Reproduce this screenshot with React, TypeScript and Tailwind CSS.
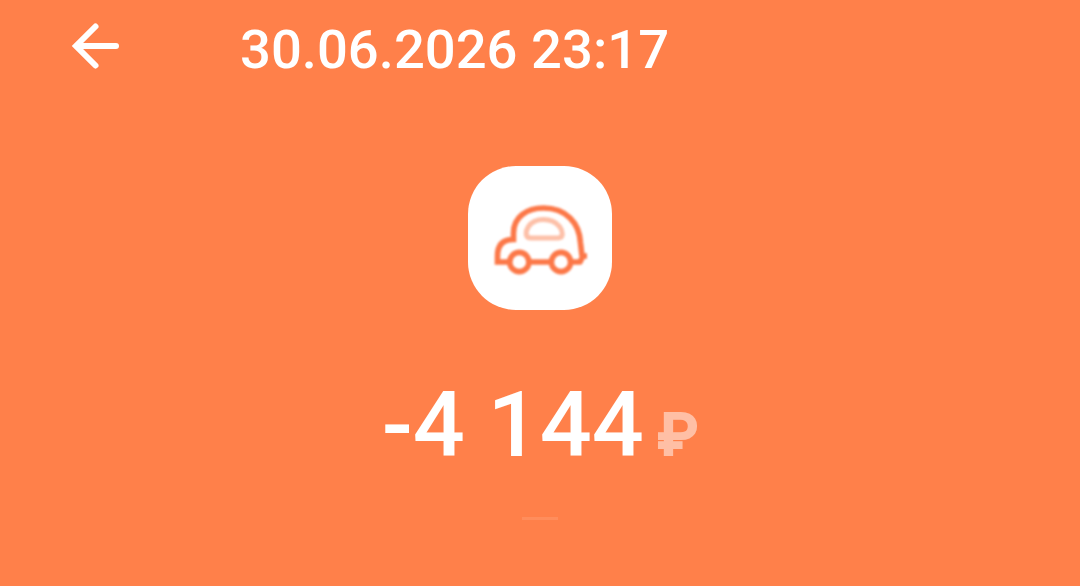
interface Operation {
    date: string;
    amount: string;
    currency: string;
}

const operation: Operation = {
    date: '30.06.2026 23:17',
    amount: '-4 144',
    currency: '₽',
};

function BackIcon() {
    return (
        <svg viewBox="0 0 52 48" className="h-12 w-[52px]" fill="none" stroke="white" strokeWidth="6" strokeLinecap="round">
            <path d="M46 24H7" />
            <path d="M25.5 4.5L6 24L25.5 43.5" strokeLinejoin="miter" />
        </svg>
    );
}

function CarIcon() {
    return (
        <svg viewBox="0 0 144 144" className="h-36 w-36 blur-[0.9px]" fill="none" stroke="#fc7848" strokeWidth="5.6">
            <path d="M41 96H29.5V90C29.5 79 35 73.5 45.5 73.5V67C45.5 51 59 42 75.5 42C98 42 111.5 57 112.5 77L114 90" />
            <path d="M61 96H83.5M103 96H112L115 90H119" strokeLinejoin="round" />
            <circle cx="51.3" cy="96" r="9.6" />
            <circle cx="93" cy="96" r="9.6" />
            <path d="M63 72H90C96 72 95 65 91.5 60.5C87.5 55.5 82 53.5 75.5 53.5C69 53.5 64 55.5 60.5 60.5C57.5 65 56.5 72 63 72Z" stroke="#fdc0a8" strokeWidth="5" />
        </svg>
    );
}

export default function App() {
    return (
        <div className="flex h-[586px] w-full flex-col items-center overflow-hidden bg-[#ff804a] font-['Roboto',sans-serif] text-white">
            <header className="flex h-[98px] w-full items-center pl-[70px]">
                <button className="-mt-1.5 mr-[118px]" aria-label="Back">
                    <BackIcon />
                </button>
                <h1 className="pt-0.5 text-[54.4px] leading-none font-medium whitespace-nowrap">{operation.date}</h1>
            </header>

            <div className="mt-[68px] size-36 rounded-[48px] bg-white">
                <CarIcon />
            </div>

            <div className="mt-[69px] flex h-[92px] items-baseline whitespace-nowrap">
                <span className="text-[91.6px] leading-[92px] font-medium">{operation.amount}</span>
                <span className="ml-3.5 -translate-y-px text-[59px] leading-none font-medium opacity-50 [-webkit-text-stroke:2px_white]">{operation.currency}</span>
            </div>

            <div className="mt-[46px] h-[3px] w-9 bg-white/10" />
        </div>
    );
}
